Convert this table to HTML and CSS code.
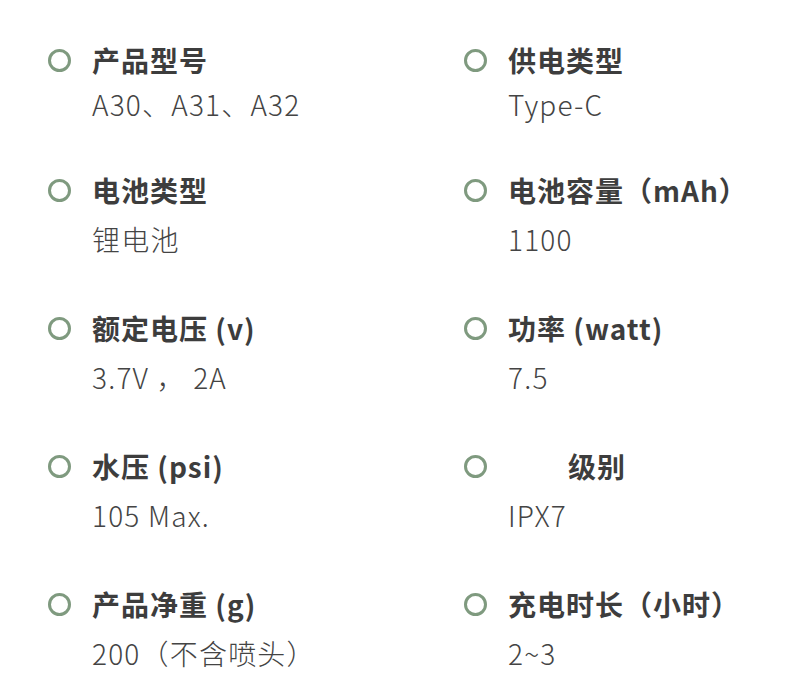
FILE: index.html
```html
<!DOCTYPE html>
<html lang="zh-CN">
<head>
<meta charset="utf-8">
<title>产品参数</title>
<link rel="stylesheet" href="styles.css">
</head>
<body>
<div class="specs">
  <div class="item first">
    <div class="head"><span class="dot"></span><span class="title">产品型号</span></div>
    <div class="value">A30、A31、A32</div>
  </div>
  <div class="item first">
    <div class="head"><span class="dot"></span><span class="title">供电类型</span></div>
    <div class="value">Type-C</div>
  </div>
  <div class="item">
    <div class="head"><span class="dot"></span><span class="title">电池类型</span></div>
    <div class="value">锂电池</div>
  </div>
  <div class="item">
    <div class="head"><span class="dot"></span><span class="title">电池容量（mAh）</span></div>
    <div class="value">1100</div>
  </div>
  <div class="item">
    <div class="head"><span class="dot"></span><span class="title">额定电压 (v)</span></div>
    <div class="value">3.7V ， 2A</div>
  </div>
  <div class="item">
    <div class="head"><span class="dot"></span><span class="title">功率 (watt)</span></div>
    <div class="value">7.5</div>
  </div>
  <div class="item">
    <div class="head"><span class="dot"></span><span class="title">水压 (psi)</span></div>
    <div class="value">105 Max.</div>
  </div>
  <div class="item">
    <div class="head"><span class="dot"></span><span class="title"><span class="blank"></span>级别</span></div>
    <div class="value">IPX7</div>
  </div>
  <div class="item">
    <div class="head"><span class="dot"></span><span class="title">产品净重 (g)</span></div>
    <div class="value">200（不含喷头）</div>
  </div>
  <div class="item">
    <div class="head"><span class="dot"></span><span class="title">充电时长（小时）</span></div>
    <div class="value">2~3</div>
  </div>
</div>
</body>
</html>
```
FILE: styles.css
```css
html, body {
  margin: 0;
  padding: 0;
  background: #ffffff;
}
body {
  font-family: "Noto Sans CJK SC", "Noto Sans", sans-serif;
  color: #3a3a3a;
}
.specs {
  display: grid;
  grid-template-columns: 416px 1fr;
  row-gap: 49px;
  padding: 40px 0 0 48px;
}
.item {
  display: flex;
  flex-direction: column;
}
.head {
  display: flex;
  align-items: center;
  height: 40px;
}
.dot {
  width: 17px;
  height: 17px;
  border: 3px solid #7f9a7f;
  border-radius: 50%;
  flex: none;
  margin-right: 21px;
}
.title {
  font-size: 28px;
  font-weight: 700;
  line-height: 40px;
  letter-spacing: 1px;
  color: #3d3d3d;
  white-space: nowrap;
}
.blank {
  display: inline-block;
  width: 60px;
}
.value {
  margin-left: 44px;
  margin-top: 9px;
  font-size: 28px;
  font-weight: 200;
  line-height: 40px;
  letter-spacing: 1.2px;
  color: #444444;
  white-space: nowrap;
}
.first {
  margin-bottom: -3px;
}
.first .value {
  margin-top: 4px;
}
```
